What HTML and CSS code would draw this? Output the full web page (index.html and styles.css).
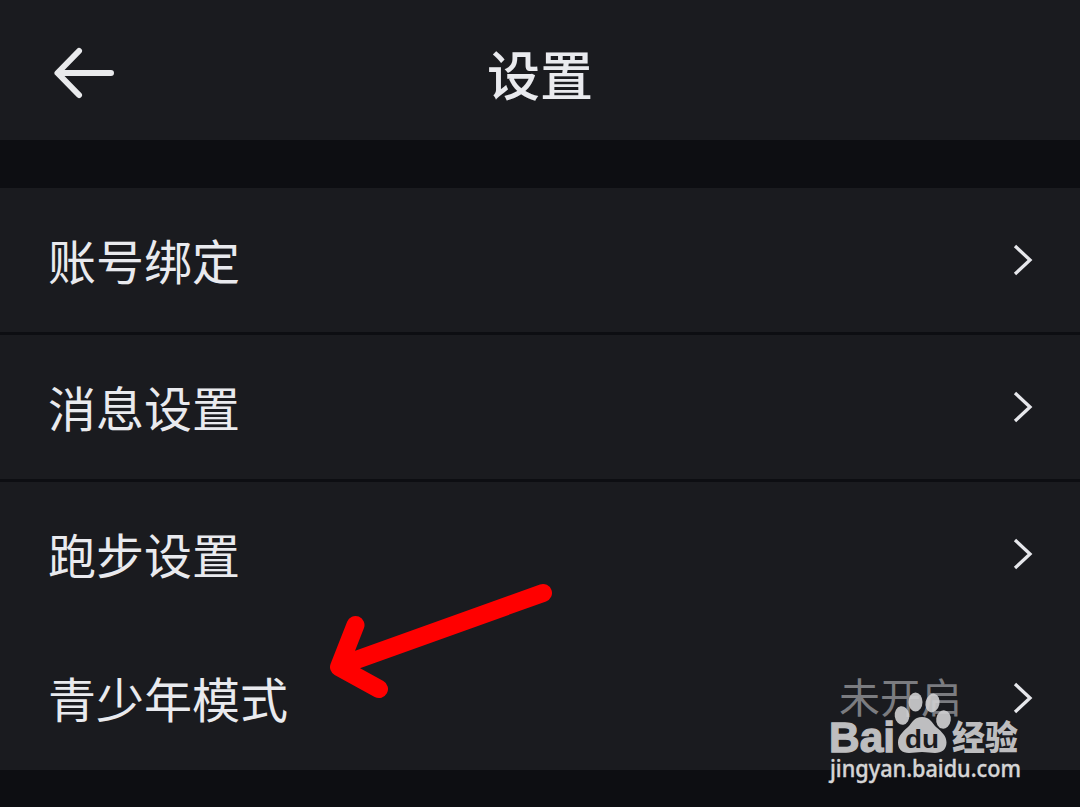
FILE: index.html
```
<!DOCTYPE html>
<html lang="zh-CN">
<head>
    <meta charset="UTF-8">
    <meta name="viewport" content="width=device-width, initial-scale=1.0">
    <link rel="stylesheet" href="styles.css">
    <title>设置</title>
</head>
<body>
    <header class="header">
        <svg class="back" viewBox="0 0 64 54">
            <path d="M27 5L5.500 27l21.500 22M8 27h51"/>
        </svg>
        <h1>设置</h1>
    </header>

    <main class="list">
        <div class="row line">
            <span class="label">账号绑定</span>
            <svg class="chevron" viewBox="0 0 20 32"><path d="M2 2l15 14L2 30"/></svg>
        </div>
        <div class="row line">
            <span class="label">消息设置</span>
            <svg class="chevron" viewBox="0 0 20 32"><path d="M2 2l15 14L2 30"/></svg>
        </div>
        <div class="row">
            <span class="label">跑步设置</span>
            <svg class="chevron" viewBox="0 0 20 32"><path d="M2 2l15 14L2 30"/></svg>
        </div>
        <div class="row">
            <span class="label">青少年模式</span>
            <span class="value">未开启</span>
            <svg class="chevron" viewBox="0 0 20 32"><path d="M2 2l15 14L2 30"/></svg>
        </div>
    </main>

    <!-- red pointer arrow -->
    <svg class="pointer" viewBox="310 570 260 140">
        <path d="M543 593L345 664M355.500 625L339 667L379 689"/>
    </svg>

    <!-- watermark -->
    <svg class="watermark" viewBox="820 680 220 110">
        <g class="paw">
            <ellipse cx="902" cy="715.500" rx="7.300" ry="9.300" transform="rotate(-8 902 715.500)"/>
            <ellipse cx="915.500" cy="702" rx="7" ry="9.500"/>
            <ellipse cx="932.500" cy="703" rx="7" ry="9.500" transform="rotate(12 932.500 703)"/>
            <ellipse cx="943.500" cy="719.500" rx="7.300" ry="9.200" transform="rotate(8 943.500 719.500)"/>
            <path d="M922 717c8 0 10 6 14 10 6 5 10.500 9 10.500 15.500 0 7-5 10.500-11.500 10.500-5 0-8-1-13-1s-8 1-13 1c-7 0-11-4-11-10.500 0-6.500 4.500-10.500 10-15.500 4-4 6-10 14-10z"/>
        </g>
        <text class="bai" x="829" y="751.500" textLength="66" lengthAdjust="spacingAndGlyphs">Bai</text>
        <text class="du" x="905" y="747.500" textLength="34" lengthAdjust="spacingAndGlyphs">du</text>
        <text class="jingyan" x="952" y="749.500" textLength="66" lengthAdjust="spacingAndGlyphs">经验</text>
        <text class="url" x="830" y="777" textLength="191" lengthAdjust="spacingAndGlyphs">jingyan.baidu.com</text>
    </svg>
</body>
</html>
```
FILE: styles.css
```
body {
    font-family: "Noto Sans CJK SC", sans-serif;
    background: #0d0e12;
    color: #e9eaee;
    margin: 0;
    height: 807px;
    position: relative;
    overflow: hidden;
}

.header {
    background: #1a1b1f;
    height: 140px;
    margin-bottom: 48px;
    padding: 0 52px;
    display: grid;
    grid-template-columns: 64px 1fr 64px;
    align-items: center;
    box-sizing: border-box;
}

.header h1 {
    margin: 6px 0 0;
    font-size: 53px;
    font-weight: 500;
    line-height: 60px;
    text-align: center;
}

.back {
    width: 64px;
    height: 54px;
    margin-top: 6px;
    fill: none;
    stroke: #e9eaec;
    stroke-width: 6;
    stroke-linecap: round;
    stroke-linejoin: round;
}

.row {
    background: #1a1b1f;
    height: 144px;
    padding: 0 47px 0 48px;
    display: flex;
    align-items: center;
    box-sizing: border-box;
}

.line {
    margin-bottom: 3px;
}

.label {
    flex: 1;
    font-size: 48px;
    line-height: 60px;
    padding-bottom: 2px;
}

.value {
    color: #7b7c80;
    font-size: 41px;
    line-height: 60px;
    margin-right: 51px;
    padding-bottom: 6px;
}

.chevron {
    width: 20px;
    height: 32px;
    fill: none;
    stroke: #e6e7eb;
    stroke-width: 3.3;
}

.pointer {
    position: absolute;
    left: 310px;
    top: 570px;
    width: 260px;
    height: 140px;
    fill: none;
    stroke: #ff0000;
    stroke-width: 18;
    stroke-linecap: round;
    stroke-linejoin: round;
}

.watermark {
    position: absolute;
    left: 820px;
    top: 680px;
    width: 220px;
    height: 110px;
    fill: #bdbdbf;
}

.paw {
    fill: #d0d0d2;
    fill-opacity: 0.9;
}

.bai {
    font: 700 43px "Liberation Sans", sans-serif;
    stroke: #bdbdbf;
    stroke-width: 1.3;
}

.du {
    font: 700 25px "Liberation Sans", sans-serif;
    fill: #1a1b1f;
}

.jingyan {
    font: 900 34px "Noto Sans CJK SC", sans-serif;
}

.url {
    font: 500 23px "Noto Sans", sans-serif;
    fill: #d5d5d6;
    stroke: #d5d5d6;
    stroke-width: 0.4;
}
```
